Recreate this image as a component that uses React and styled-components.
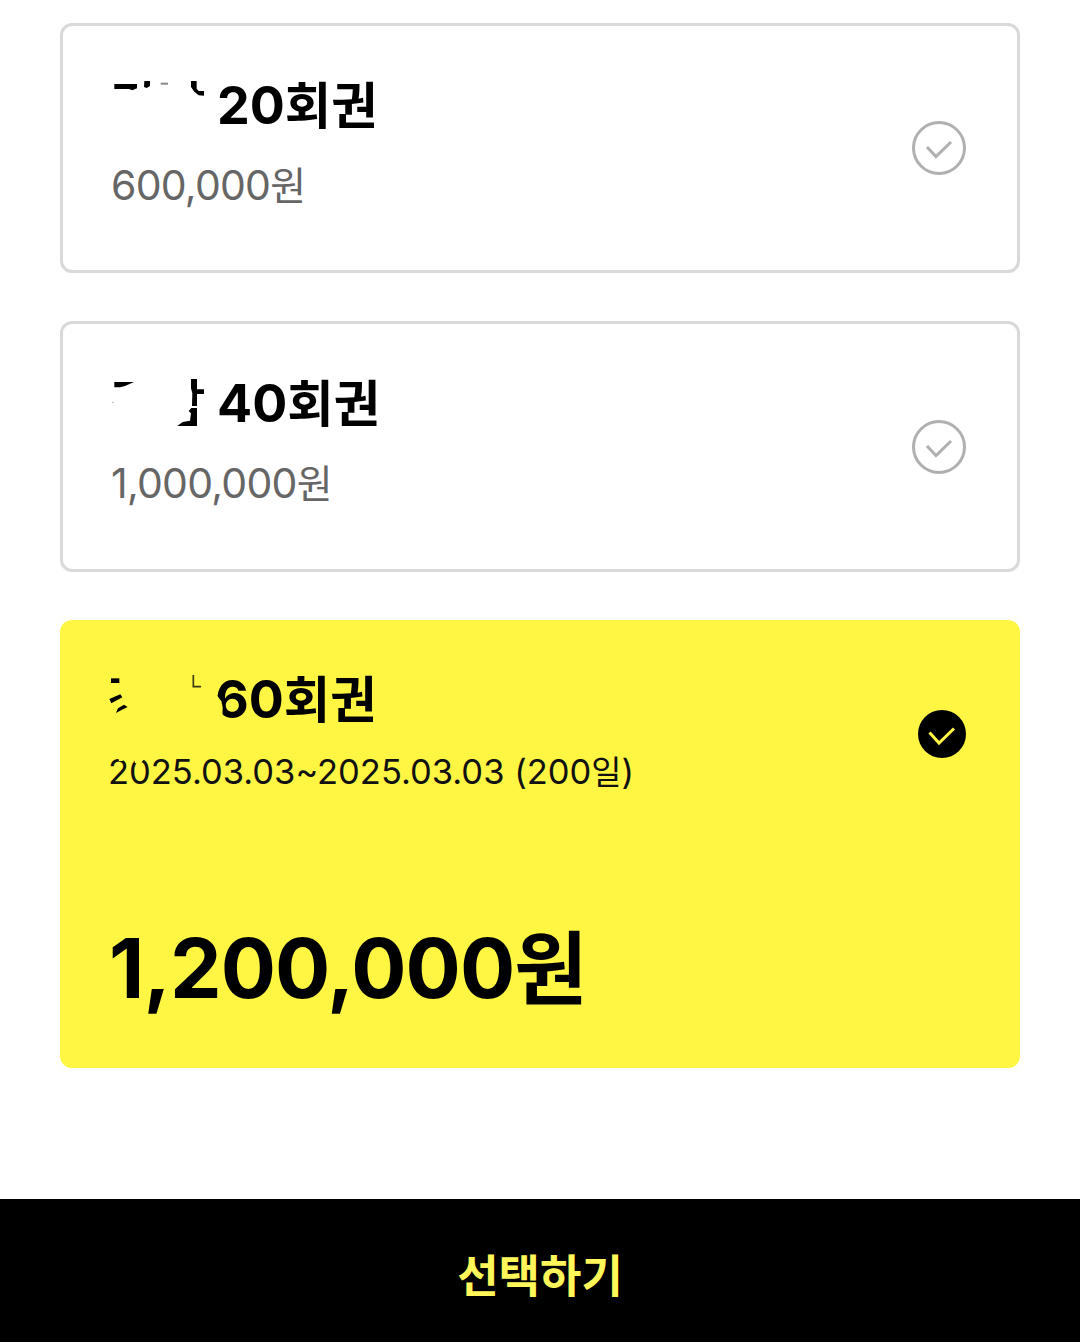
import { useState } from "react";
import styled, { createGlobalStyle } from "styled-components";

const tickets = [
	{ id: 1, count: "20", price: "600,000" },
	{ id: 2, count: "40", price: "1,000,000" },
	{
		id: 3,
		count: "60",
		price: "1,200,000",
		period: "2025.03.03~2025.03.03",
		days: "200",
	},
];

// what is left of the hidden name in front of each ticket
const Remains = ({ id }) => {
	if (id === 1) {
		return (
			<RemainsSvg viewBox="174 204 327 162">
				<path d="M193 222H261V235L247 241L237 237H193Z" />
				<path d="M283 213H300V228L290 234L282 231Z" />
				<path d="M332 218H354V224H332Z" fill="#888" />
				<path d="M423 213H440V236L446 243H462V257L446 256L433 245L423 231Z" />
			</RemainsSvg>
		);
	}
	if (id === 2) {
		return (
			<RemainsSvg viewBox="174 198 327 162">
				<path d="M193 216H252L225 228L210 232H193Z" />
				<path d="M187 275H190V279H187Z" fill="#999" />
				<path d="M423 207H441V238H462V252H441V288H426L427 250L423 235Z" />
				<path d="M424 294H441V348H382L398 336L420 332L423 310L416 303Z" />
			</RemainsSvg>
		);
	}
	return (
		<RemainsSvg viewBox="174 186 321 162" $narrow>
			<path d="M183 205H208V219H183Z" />
			<path d="M178 267L211 253L217 262L184 280Z" />
			<path d="M198 309L204 295L222 284L233 291L216 299Z" />
			<path d="M430 195V230H453" fill="none" stroke="#3c3a10" strokeWidth="5" />
			<path d="M490 262L502 258L514 274L518 292L517 330H490Z" fill="#fff644" />
			<path d="M205 443H222L219 452L207 454Z" fill="#fff644" />
			<path d="M254 443H286L276 455L262 462L254 458Z" fill="#fff644" />
		</RemainsSvg>
	);
};

const Check = ({ active }) => (
	<CheckSvg viewBox="0 0 54 54" $active={active}>
		{active ? (
			<>
				<circle cx="30" cy="27" r="24" fill="#000" />
				<path d="M17.5 25.5L27 36L42 21.5" stroke="#fff644" />
			</>
		) : (
			<>
				<circle cx="27" cy="27" r="25.5" stroke="#b0b0b0" />
				<path d="M15 26L24 35.5L39 21" stroke="#b0b0b0" />
			</>
		)}
	</CheckSvg>
);

const App = () => {
	const [selected, setSelected] = useState(3);

	return (
		<Page>
			<GlobalStyle />
			<List>
				{tickets.map((t) => {
					const active = t.id === selected;
					return (
						<Card key={t.id} $active={active} onClick={() => setSelected(t.id)}>
							<Top>
								<Info>
									<Title>
										<Remains id={t.id} />
										<span>
											{t.count}
											<Hangul $bold>회권</Hangul>
										</span>
									</Title>
									{active && t.period ? (
										<Period>
											{t.period} ({t.days}
											<Hangul>일</Hangul>)
										</Period>
									) : (
										<Price>
											{t.price}
											<Hangul>원</Hangul>
										</Price>
									)}
								</Info>
								<Check active={active} />
							</Top>
							{active && (
								<Total>
									{t.price}
									<Hangul $bold>원</Hangul>
								</Total>
							)}
						</Card>
					);
				})}
			</List>
			<Submit>선택하기</Submit>
		</Page>
	);
};

const GlobalStyle = createGlobalStyle`
	* {
		box-sizing: border-box;
	}
	body {
		margin: 0;
		background: #fff;
	}
`;
const Page = styled.div`
	display: flex;
	flex-direction: column;
	width: 1080px;
	height: 1342px;
	overflow: hidden;
	font-family: Inter, "Noto Sans CJK KR", sans-serif;
`;
const List = styled.div`
	flex: 1;
	display: flex;
	flex-direction: column;
	gap: 48px;
	padding: 23px 60px 0;
`;
const Card = styled.div`
	height: ${({ $active }) => ($active ? "448px" : "250.4px")};
	padding: ${({ $active }) => ($active ? "46px 51px" : "49px 51px")};
	padding-left: 45px;
	border: 3px solid ${({ $active }) => ($active ? "#fff644" : "#d9d9d9")};
	border-radius: 12px;
	background: ${({ $active }) => ($active ? "#fff644" : "#fff")};
	cursor: pointer;
`;
const Top = styled.div`
	display: flex;
	justify-content: space-between;
`;
const Info = styled.div`
	display: flex;
	flex-direction: column;
`;
const Hangul = styled.span`
	font-size: ${({ $bold }) => ($bold ? "0.97em" : "0.95em")};
	line-height: 1;
`;
const Title = styled.div`
	display: flex;
	height: 60px;
	line-height: 62px;
	font-size: 52px;
	font-weight: 700;
	white-space: nowrap;
`;
const RemainsSvg = styled.svg`
	position: relative;
	width: ${({ $narrow }) => ($narrow ? "107px" : "109px")};
	height: 54px;
	margin-top: 3px;
	overflow: visible;
`;
const Price = styled.div`
	margin-top: 20px;
	padding-left: 3px;
	line-height: 60px;
	font-size: 41px;
	letter-spacing: -0.75px;
	color: #666;
`;
const Period = styled.div`
	margin-top: 16px;
	line-height: 54px;
	font-size: 34.5px;
	color: #111;
`;
const Total = styled.div`
	margin-top: 115px;
	padding-left: 1px;
	line-height: 110px;
	font-size: 82px;
	font-weight: 700;
	letter-spacing: -0.9px;
`;
const CheckSvg = styled.svg`
	width: 54px;
	height: 54px;
	margin-top: ${({ $active }) => ($active ? "38px" : "46.3px")};
	fill: none;
	stroke-width: 3;
`;
const Submit = styled.button`
	height: 143px;
	padding: 5px 0 0;
	border: none;
	background: #000;
	color: #fff659;
	font-family: inherit;
	font-size: 45px;
	font-weight: 600;
`;

export default App;
